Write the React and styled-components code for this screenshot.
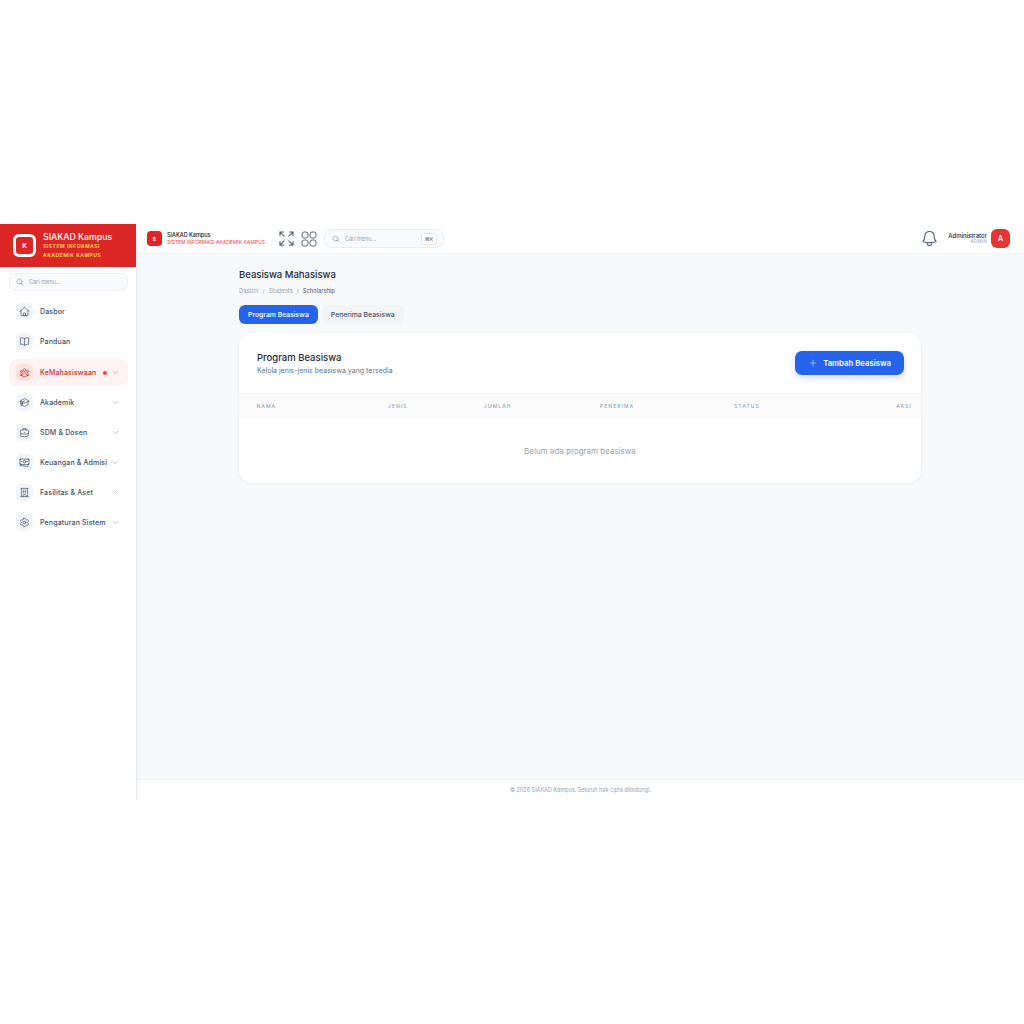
import React from 'react';
import styled, { createGlobalStyle } from 'styled-components';
import { ChevronDown, Plus } from 'lucide-react';
import {
  HiOutlineMagnifyingGlass, HiOutlineHome, HiOutlineBookOpen, HiOutlineUserGroup,
  HiOutlineAcademicCap, HiOutlineBriefcase, HiOutlineBanknotes, HiOutlineBuildingOffice,
  HiOutlineCog6Tooth, HiOutlineBell, HiOutlineArrowsPointingOut,
} from 'react-icons/hi2';

const GlobalStyle = createGlobalStyle`
  * { box-sizing: border-box; }
  html, body { margin: 0; height: 100%; background: #fff; }
  body { font-family: Inter, "Noto Sans", sans-serif; color: #1e293b; }
  #root { height: 100%; }
`;

const Stage = styled.div`
  height: 100vh;
  display: flex;
  align-items: center;
`;

const Frame = styled.div`
  width: 1024px;
  height: 576px;
  display: flex;
  overflow: hidden;
`;

const Sidebar = styled.aside`
  width: 137px;
  flex: none;
  background: #fff;
  border-right: 1px solid #e8ebf0;
  box-shadow: 1px 0 4px rgba(15, 23, 42, 0.05);
  display: flex;
  flex-direction: column;
  z-index: 1;
`;

const Brand = styled.div`
  height: 43px;
  background: #dc2626;
  display: flex;
  align-items: center;
  gap: 7px;
  padding: 0 0 0 13px;
`;

const BrandMark = styled.div`
  width: 23px;
  height: 23px;
  border: 3px solid #fff;
  border-radius: 6px;
  color: #fff;
  font-size: 6.5px;
  font-weight: 700;
  display: flex;
  align-items: center;
  justify-content: center;
`;

const BrandName = styled.div`
  color: #fff;
  font-size: 8.75px;
  font-weight: 500;
  line-height: 10px;
  white-space: nowrap;
`;

const BrandSub = styled.div`
  color: #fde047;
  font-size: 5px;
  font-weight: 600;
  letter-spacing: 0.55px;
  line-height: 9px;
`;

const SideSearch = styled.div`
  margin: 6px 8px 0 9px;
  height: 18px;
  border: 1px solid #eef1f5;
  background: #f8fafc;
  border-radius: 7px;
  display: flex;
  align-items: center;
  gap: 5px;
  padding-left: 6px;
  font-size: 5.5px;
  color: #94a3b8;
`;

const Nav = styled.nav`
  display: flex;
  flex-direction: column;
  padding: 7px 8px 0 9px;
`;

const Item = styled.div`
  height: 27px;
  margin-bottom: ${p => (p.$gapAfter ? 4 : 3)}px;
  padding: 0 8px 0 7px;
  border-radius: 8px;
  display: flex;
  align-items: center;
  background: ${p => (p.$active ? '#fef2f2' : 'transparent')};
  color: ${p => (p.$active ? '#dc2626' : '#3f4f66')};
`;

const IconBox = styled.div`
  width: 17px;
  height: 17px;
  flex: none;
  border-radius: 5px;
  background: ${p => (p.$active ? '#fee2e2' : '#f1f5f9')};
  display: flex;
  align-items: center;
  justify-content: center;
  margin-right: 7px;
  color: ${p => (p.$active ? '#dc2626' : '#475569')};
`;

const ItemLabel = styled.span`
  flex: 1;
  font-size: 7px;
  font-weight: 500;
  letter-spacing: 0.15px;
  white-space: nowrap;
  overflow: hidden;
`;

const Dot = styled.span`
  width: 4px;
  height: 4px;
  background: #ef4444;
  border-radius: 50%;
  margin-right: 4px;
`;

const Main = styled.div`
  flex: 1;
  min-width: 0;
  display: flex;
  flex-direction: column;
  background: #f8f9fb;
`;

const TopBar = styled.header`
  height: 30px;
  flex: none;
  background: #fff;
  border-bottom: 1px solid #f1f3f6;
  display: flex;
  align-items: center;
  padding: 0 14px 0 10px;
`;

const MiniLogo = styled.div`
  width: 15px;
  height: 15px;
  background: #dc2626;
  border-radius: 4px;
  color: #fff;
  font-size: 5px;
  font-weight: 700;
  display: flex;
  align-items: center;
  justify-content: center;
  margin-right: 5px;
`;

const MiniName = styled.div`
  font-size: 5.5px;
  font-weight: 500;
  line-height: 7px;
  color: #0f172a;
`;

const MiniSub = styled.div`
  font-size: 5px;
  line-height: 6px;
  color: #ef4444;
  white-space: nowrap;
`;

const ToolIcons = styled.div`
  display: flex;
  align-items: center;
  gap: 5px;
  margin-left: 12px;
  color: #5b6a7f;
`;

const TopSearch = styled.div`
  width: 120px;
  height: 19px;
  margin-left: 7px;
  border: 1px solid #e9edf2;
  background: #f8fafc;
  border-radius: 8px;
  display: flex;
  align-items: center;
  gap: 5px;
  padding: 0 6px 0 7px;
  font-size: 5.5px;
  color: #94a3b8;
`;

const Kbd = styled.span`
  margin-left: auto;
  width: 16px;
  height: 12px;
  background: #fff;
  border: 1px solid #e5e7eb;
  border-radius: 3px;
  font-size: 5px;
  font-weight: 500;
  color: #64748b;
  display: flex;
  align-items: center;
  justify-content: center;
`;

const UserArea = styled.div`
  margin-left: auto;
  display: flex;
  align-items: center;
  color: #5b6a7f;
`;

const UserText = styled.div`
  margin: 0 4px 0 9px;
  text-align: right;
`;

const UserName = styled.div`
  font-size: 6px;
  font-weight: 500;
  line-height: 7px;
  color: #1e293b;
`;

const UserRole = styled.div`
  font-size: 4.5px;
  line-height: 6px;
  letter-spacing: 0.3px;
  color: #94a3b8;
`;

const Avatar = styled.div`
  width: 19px;
  height: 19px;
  background: #e53535;
  border-radius: 6px;
  color: #fff;
  font-size: 7px;
  font-weight: 600;
  display: flex;
  align-items: center;
  justify-content: center;
`;

const Content = styled.main`
  flex: 1;
  padding: 14px 103px 0 102px;
`;

const PageTitle = styled.h1`
  margin: 0;
  font-size: 9.5px;
  font-weight: 500;
  line-height: 13px;
  color: #1e293b;
`;

const Crumbs = styled.div`
  display: flex;
  gap: 4px;
  margin-top: 6px;
  font-size: 5.75px;
  line-height: 8px;
  color: #94a3b8;
`;

const CrumbNow = styled.span`
  color: #475569;
`;

const Tabs = styled.div`
  display: flex;
  gap: 4px;
  margin-top: 10px;
`;

const Tab = styled.button`
  height: 19px;
  padding: 0 9px;
  border: 0;
  border-radius: 6px;
  font-family: inherit;
  font-size: 6.85px;
  font-weight: 500;
  background: ${p => (p.$active ? '#2563eb' : '#f3f4f6')};
  color: ${p => (p.$active ? '#fff' : '#475569')};
`;

const Card = styled.section`
  margin-top: 9px;
  height: 150px;
  width: 682px;
  background: #fff;
  border-radius: 13px;
  box-shadow: 0 1px 3px rgba(15, 23, 42, 0.06);
  overflow: hidden;
`;

const CardHead = styled.div`
  height: 60px;
  padding: 0 17px 0 18px;
  display: flex;
  align-items: center;
  justify-content: space-between;
`;

const CardTitle = styled.h2`
  margin: 0;
  font-size: 9.5px;
  font-weight: 500;
  line-height: 12px;
  color: #1e293b;
`;

const CardSub = styled.p`
  margin: 3px 0 0;
  font-size: 7px;
  line-height: 8px;
  color: #64748b;
`;

const AddButton = styled.button`
  height: 24px;
  width: 109px;
  border: 0;
  border-radius: 7px;
  background: #2563eb;
  box-shadow: 0 3px 7px rgba(37, 99, 235, 0.22);
  color: #fff;
  font-family: inherit;
  font-size: 7.75px;
  font-weight: 600;
  display: flex;
  align-items: center;
  justify-content: center;
  gap: 5px;
`;

const TableHead = styled.div`
  height: 25px;
  background: #fbfbfc;
  border-top: 1px solid #f5f5f6;
  display: grid;
  grid-template-columns: 131.5px 96px 116px 134px 1fr auto;
  align-items: center;
  padding: 0 9px 0 17.5px;
  font-size: 5px;
  font-weight: 500;
  letter-spacing: 1.05px;
  color: #94a3b8;
`;

const Empty = styled.div`
  height: 65px;
  display: flex;
  align-items: center;
  justify-content: center;
  font-size: 8px;
  color: #9ca3af;
`;

const Footer = styled.footer`
  height: 21px;
  flex: none;
  background: #fff;
  border-top: 1px solid #f1f3f6;
  display: flex;
  align-items: center;
  justify-content: center;
  font-size: 5.5px;
  color: #94a3b8;
`;

const menu = [
  { label: 'Dasbor', icon: HiOutlineHome },
  { label: 'Panduan', icon: HiOutlineBookOpen, gapAfter: true },
  { label: 'KeMahasiswaan', icon: HiOutlineUserGroup, caret: true, active: true },
  { label: 'Akademik', icon: HiOutlineAcademicCap, caret: true },
  { label: 'SDM & Dosen', icon: HiOutlineBriefcase, caret: true },
  { label: 'Keuangan & Admisi', icon: HiOutlineBanknotes, caret: true },
  { label: 'Fasilitas & Aset', icon: HiOutlineBuildingOffice, caret: true },
  { label: 'Pengaturan Sistem', icon: HiOutlineCog6Tooth, caret: true },
];

const columns = ['NAMA', 'JENIS', 'JUMLAH', 'PENERIMA', 'STATUS', 'AKSI'];

const GridIcon = () => (
  <svg width="16" height="16" viewBox="0 0 16 16" fill="none" stroke="currentColor" strokeWidth="1">
    <rect x="1" y="1" width="6" height="6" rx="2" />
    <rect x="9" y="1" width="6" height="6" rx="2" />
    <rect x="1" y="9" width="6" height="6" rx="2" />
    <rect x="9" y="9" width="6" height="6" rx="2" />
  </svg>
);

export default function App() {
  return (
    <Stage>
      <GlobalStyle />
      <Frame>
        <Sidebar>
          <Brand>
            <BrandMark>K</BrandMark>
            <div>
              <BrandName>SIAKAD Kampus</BrandName>
              <BrandSub>SISTEM INFORMASI<br />AKADEMIK KAMPUS</BrandSub>
            </div>
          </Brand>
          <SideSearch>
            <HiOutlineMagnifyingGlass size={8} color="#64748b" />
            Cari menu...
          </SideSearch>
          <Nav>
            {menu.map(({ label, icon: Icon, caret, active, gapAfter }) => (
              <Item key={label} $active={active} $gapAfter={gapAfter}>
                <IconBox $active={active}>
                  <Icon size={11} />
                </IconBox>
                <ItemLabel>{label}</ItemLabel>
                {active && <Dot />}
                {caret && <ChevronDown size={9} strokeWidth={1.2} color="#64748b" />}
              </Item>
            ))}
          </Nav>
        </Sidebar>
        <Main>
          <TopBar>
            <MiniLogo>S</MiniLogo>
            <div>
              <MiniName>SIAKAD Kampus</MiniName>
              <MiniSub>SISTEM INFORMASI AKADEMIK KAMPUS</MiniSub>
            </div>
            <ToolIcons>
              <HiOutlineArrowsPointingOut size={19} />
              <GridIcon />
            </ToolIcons>
            <TopSearch>
              <HiOutlineMagnifyingGlass size={8} color="#64748b" />
              Cari menu...
              <Kbd>⌘K</Kbd>
            </TopSearch>
            <UserArea>
              <HiOutlineBell size={19} />
              <UserText>
                <UserName>Administrator</UserName>
                <UserRole>ADMIN</UserRole>
              </UserText>
              <Avatar>A</Avatar>
            </UserArea>
          </TopBar>
          <Content>
            <PageTitle>Beasiswa Mahasiswa</PageTitle>
            <Crumbs>
              <span>Dasbor</span><span>/</span><span>Students</span><span>/</span>
              <CrumbNow>Scholarship</CrumbNow>
            </Crumbs>
            <Tabs>
              <Tab $active>Program Beasiswa</Tab>
              <Tab>Penerima Beasiswa</Tab>
            </Tabs>
            <Card>
              <CardHead>
                <div>
                  <CardTitle>Program Beasiswa</CardTitle>
                  <CardSub>Kelola jenis-jenis beasiswa yang tersedia</CardSub>
                </div>
                <AddButton>
                  <Plus size={10} strokeWidth={1.2} />
                  Tambah Beasiswa
                </AddButton>
              </CardHead>
              <TableHead>
                {columns.map(c => <span key={c}>{c}</span>)}
              </TableHead>
              <Empty>Belum ada program beasiswa</Empty>
            </Card>
          </Content>
          <Footer>© 2026 SIAKAD Kampus. Seluruh hak cipta dilindungi.</Footer>
        </Main>
      </Frame>
    </Stage>
  );
}
